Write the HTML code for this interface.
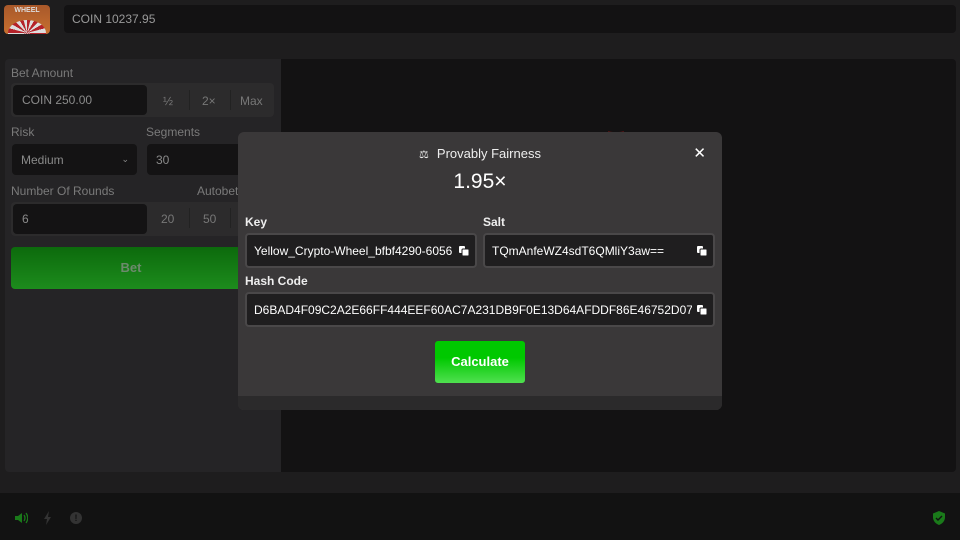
<!DOCTYPE html>
<html><head><style>
*{box-sizing:border-box;margin:0;padding:0}
body{width:960px;height:540px;background:#1e1d1e;font-family:"Liberation Sans",sans-serif;position:relative;overflow:hidden;color:#777}
.abs{position:absolute}
.inp{position:absolute;background:#141314;border-radius:4px;color:#8a8a8a;font-size:12px;display:flex;align-items:center;padding-left:9px}
.lbl{position:absolute;font-size:12px;color:#7a7a7a}
.m .lbl{color:#eee;font-weight:bold}
.mi{position:absolute;background:#1f1e1f;border:2px solid #4a4849;border-radius:4px;color:#fff;font-size:12px}
.mi span{position:absolute;left:7px;top:9px;white-space:nowrap;overflow:hidden}
.cp{position:absolute;right:6px;top:11px;width:10px;height:10px}
</style></head><body>
<div class="abs" style="left:4px;top:5px;width:46px;height:29px;border-radius:4px;background:linear-gradient(#a8582a,#c77030);overflow:hidden">
<div style="color:#ddd;font-size:7px;font-weight:bold;text-align:center;margin-top:2px">WHEEL</div>
<div style="position:absolute;left:4px;bottom:-12px;width:38px;height:26px;border-radius:50%;background:repeating-conic-gradient(from 0deg at 50% 50%,#b5222a 0 15deg,#ddd 15deg 30deg)"></div></div>
<div class="abs" style="left:64px;top:5px;width:892px;height:28px;background:#131213;border-radius:4px;color:#999;font-size:12px;padding:7px 8px">COIN 10237.95</div>
<div class="abs" style="left:5px;top:59px;width:276px;height:413px;background:#252426;border-radius:4px 0 0 4px"></div>
<div class="abs" style="left:281px;top:59px;width:675px;height:413px;background:#131213;border-radius:0 4px 4px 0"></div>
<div class="lbl" style="left:11px;top:66px">Bet Amount</div>
<div class="abs" style="left:11px;top:83px;width:263px;height:34px;background:#2c2b2c;border-radius:4px"></div>
<div class="inp" style="left:13px;top:85px;width:134px;height:30px">COIN 250.00</div>
<div class="abs" style="left:163px;top:94px;font-size:12px;color:#777">½</div>
<div class="abs" style="left:189px;top:90px;width:1px;height:20px;background:#222"></div>
<div class="abs" style="left:202px;top:94px;font-size:12px;color:#777">2×</div>
<div class="abs" style="left:230px;top:90px;width:1px;height:20px;background:#222"></div>
<div class="abs" style="left:240px;top:94px;font-size:12px;color:#777">Max</div>
<div class="lbl" style="left:11px;top:125px">Risk</div>
<div class="lbl" style="left:146px;top:125px">Segments</div>
<div class="inp" style="left:12px;top:144px;width:125px;height:31px">Medium<span style="position:absolute;right:8px;font-size:9px">⌄</span></div>
<div class="inp" style="left:147px;top:144px;width:100px;height:31px">30</div>
<div class="lbl" style="left:11px;top:184px">Number Of Rounds</div>
<div class="lbl" style="left:197px;top:184px">Autobet</div>
<div class="abs" style="left:11px;top:202px;width:263px;height:34px;background:#2c2b2c;border-radius:4px"></div>
<div class="inp" style="left:13px;top:204px;width:134px;height:30px">6</div>
<div class="abs" style="left:161px;top:212px;font-size:12px">20</div>
<div class="abs" style="left:189px;top:208px;width:1px;height:20px;background:#222"></div>
<div class="abs" style="left:203px;top:212px;font-size:12px">50</div>
<div class="abs" style="left:230px;top:208px;width:1px;height:20px;background:#222"></div>
<div class="abs" style="left:11px;top:247px;width:240px;height:42px;border-radius:4px;background:linear-gradient(#0c6a0c,#1d8c1d);color:#6c8a6c;font-size:13px;font-weight:bold;text-align:center;line-height:42px">Bet</div>
<div class="abs" style="left:608px;top:128px;width:16px;height:6px;border-bottom:2px solid #7a1515;border-radius:0 0 50% 50%"></div>
<div class="abs" style="left:0;top:493px;width:960px;height:47px;background:#121212"></div>
<svg class="abs" style="left:14px;top:511px" width="14" height="14" viewBox="0 0 14 14"><path d="M1 5h3l4-3v10l-4-3H1z" fill="#1a7a1a"/><path d="M10 4q2 3 0 6M12 2q3.5 5 0 10" stroke="#1a7a1a" stroke-width="1.3" fill="none"/></svg>
<svg class="abs" style="left:43px;top:511px" width="10" height="14" viewBox="0 0 10 14"><path d="M6 0L1 8h3l-1 6 5-8H5z" fill="#333"/></svg>
<div class="abs" style="left:70px;top:512px;width:12px;height:12px;border-radius:50%;background:#333;color:#121212;font-size:9px;font-weight:bold;text-align:center;line-height:12px">!</div>
<svg class="abs" style="left:933px;top:511px" width="12" height="14" viewBox="0 0 12 14"><path d="M6 0L0 2.5v4C0 10 3 13 6 14c3-1 6-4 6-7.5v-4z" fill="#1a7a1a"/><path d="M3 7l2 2 4-4" stroke="#111" stroke-width="1.4" fill="none"/></svg>
<div class="m abs" style="left:238px;top:132px;width:484px;height:278px;background:#3a3839;border-radius:6px;overflow:hidden">
<div class="abs" style="left:0;top:264px;width:484px;height:14px;background:#2b2a2b"></div>
<div class="abs" style="left:0;top:14px;width:484px;text-align:center;color:#eee;font-size:13px"><span style="font-size:11px;margin-right:8px">⚖</span>Provably Fairness</div>
<div class="abs" style="right:16px;top:12px;color:#fff;font-size:15px">✕</div>
<div class="abs" style="left:0;top:38px;width:484px;text-align:center;color:#fff;font-size:21px">1.95×</div>
<div class="lbl" style="left:7px;top:83px">Key</div>
<div class="lbl" style="left:245px;top:83px">Salt</div>
<div class="mi" style="left:7px;top:101px;width:232px;height:35px"><span style="width:206px">Yellow_Crypto-Wheel_bfbf4290-6056</span><svg class="cp" viewBox="0 0 10 10"><rect x="0" y="0" width="6" height="7" rx="1" fill="#fff"/><rect x="3" y="3" width="7" height="7" rx="1" fill="#fff" stroke="#1f1e1f"/></svg></div>
<div class="mi" style="left:245px;top:101px;width:232px;height:35px"><span>TQmAnfeWZ4sdT6QMliY3aw==</span><svg class="cp" viewBox="0 0 10 10"><rect x="0" y="0" width="6" height="7" rx="1" fill="#fff"/><rect x="3" y="3" width="7" height="7" rx="1" fill="#fff" stroke="#1f1e1f"/></svg></div>
<div class="lbl" style="left:7px;top:142px">Hash Code</div>
<div class="mi" style="left:7px;top:160px;width:470px;height:35px"><span style="width:438px">D6BAD4F09C2A2E66FF444EEF60AC7A231DB9F0E13D64AFDDF86E46752D07CEA</span><svg class="cp" viewBox="0 0 10 10"><rect x="0" y="0" width="6" height="7" rx="1" fill="#fff"/><rect x="3" y="3" width="7" height="7" rx="1" fill="#fff" stroke="#1f1e1f"/></svg></div>
<div class="abs" style="left:197px;top:209px;width:90px;height:42px;border-radius:3px;background:linear-gradient(#00c800 40%,#50e050);color:#fff;font-weight:bold;font-size:13px;text-align:center;line-height:42px">Calculate</div>
</div>
</body></html>
